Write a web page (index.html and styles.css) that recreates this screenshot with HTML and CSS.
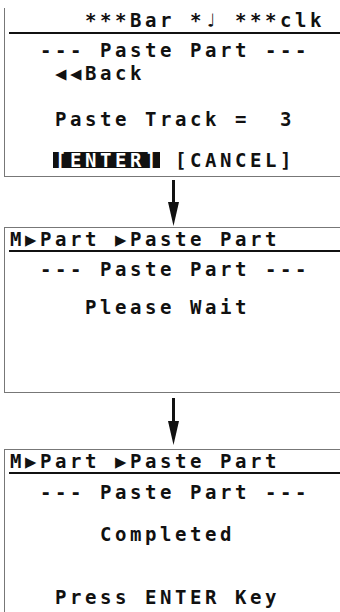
FILE: index.html
```html
<!DOCTYPE html>
<html lang="en">
<head>
  <meta charset="UTF-8">
  <title>Paste Part</title>
  <link rel="stylesheet" href="styles.css">
</head>
<body>

<!-- Screen 1: confirm -->
<div class="lcd lcd-first">
  <div class="lcd-head head-right">***Bar *♩ ***clk</div>
  <div class="row title">--- Paste Part ---</div>
  <div class="row">   ◀◀Back</div>
  <div class="row"> </div>
  <div class="row">   Paste Track =  3</div>
  <div class="row row-keys">   <span class="hl">[ENTER]</span> [CANCEL]</div>
</div>

<svg class="arrow" width="340" height="50" viewBox="0 0 340 50">
  <rect x="172" y="3" width="3" height="24" fill="#111"/>
  <polygon points="168,25 179,25 173.5,49" fill="#111"/>
</svg>

<!-- Screen 2: working -->
<div class="lcd lcd-wait">
  <div class="lcd-head">M▶Part ▶Paste Part</div>
  <div class="row title">--- Paste Part ---</div>
  <div class="row wait">     Please Wait</div>
</div>

<svg class="arrow" width="340" height="56" viewBox="0 0 340 56">
  <rect x="172" y="5" width="3" height="25" fill="#111"/>
  <polygon points="168,28 179,28 173.5,52" fill="#111"/>
</svg>

<!-- Screen 3: done -->
<div class="lcd lcd-done">
  <div class="lcd-head">M▶Part ▶Paste Part</div>
  <div class="row title title-done">--- Paste Part ---</div>
  <div class="row done">      Completed</div>
  <div class="row press">   Press ENTER Key</div>
</div>

</body>
</html>
```

FILE: styles.css
```css
body {
  margin: 0;
  width: 340px;
  background: #fff;
  color: #111;
  font-family: "DejaVu Sans Mono", "Liberation Mono", monospace;
  font-size: 19px;
  font-weight: bold;
  overflow: hidden;
}

.lcd {
  margin-left: 4px;
  border-left: 1px solid #777;
  padding-left: 4px;
}

.lcd-first {
  margin-top: 8px;
  padding-top: 1px;
  padding-bottom: 8px;
  border-bottom: 1px solid #777;
}

.lcd-wait {
  border-top: 1px solid #777;
  border-bottom: 1px solid #777;
  padding-bottom: 73px;
}

.lcd-done {
  border-top: 1px solid #777;
  height: 162px;
}

.lcd-head {
  line-height: 22px;
  padding-left: 1px;
  border-bottom: 2px solid #111;
  white-space: pre;
  letter-spacing: 3.56px;
}

.head-right {
  padding-bottom: 1px;
  padding-left: 76px;
}

.row {
  line-height: 23px;
  padding-left: 1px;
  white-space: pre;
  letter-spacing: 3.56px;
}

.title {
  margin-top: 5px;
  padding-left: 31px;
}

.lcd-wait .title {
  margin-top: 6px;
}

.title-done {
  margin-top: 7px !important;
}

.row-keys {
  margin-top: 21px;
  line-height: 16px;
}

.hl {
  display: inline-block;
  line-height: 16px;
  background: #111;
  color: #fff;
  margin-left: -2px;
  padding-left: 2px;
}

.wait {
  margin-top: 15px;
}

.done {
  margin-top: 19px;
}

.press {
  margin-top: 40px;
}

.arrow {
  display: block;
}
```
